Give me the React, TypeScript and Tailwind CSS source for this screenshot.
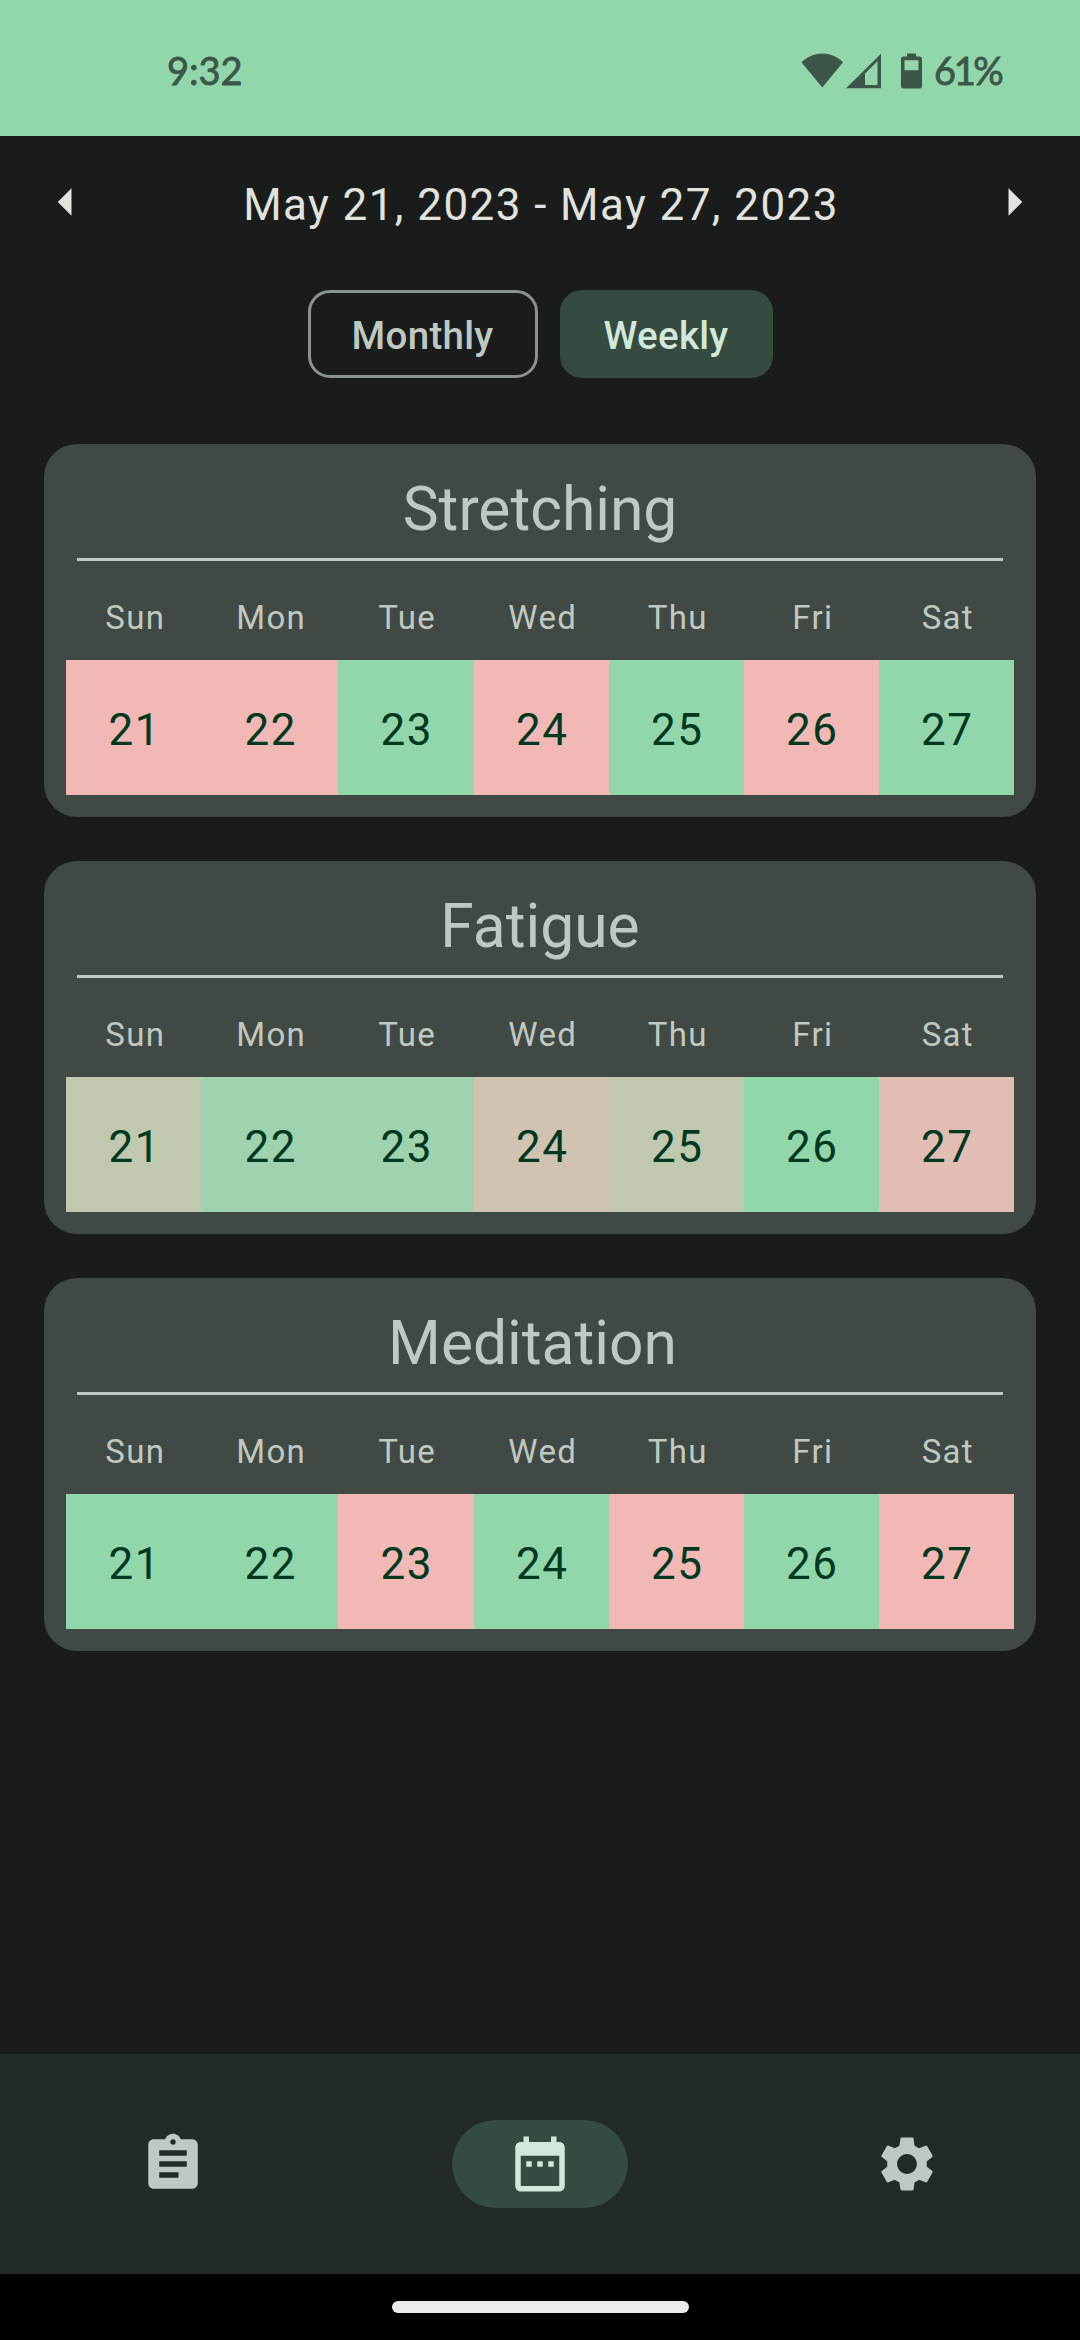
import type { ReactNode } from "react";

const WEEKDAYS = ["Sun", "Mon", "Tue", "Wed", "Thu", "Fri", "Sat"];
const DATES = [21, 22, 23, 24, 25, 26, 27];

const PINK = "bg-[#f2b8b5]";
const GREEN = "bg-[#92d6ac]";
const SAGE = "bg-[#c0c9b0]";
const MINT = "bg-[#9fd2ae]";
const SAND = "bg-[#d1c3b2]";
const BLUSH = "bg-[#e2bdb3]";

const TRACKERS = [
  { title: "Stretching", days: [PINK, PINK, GREEN, PINK, GREEN, PINK, GREEN] },
  { title: "Fatigue", days: [SAGE, MINT, MINT, SAND, SAGE, GREEN, BLUSH] },
  { title: "Meditation ", days: [GREEN, GREEN, PINK, GREEN, PINK, GREEN, PINK] },
];

const COLUMNS = "grid grid-cols-[136px_136px_136px_135px_135px_135px_135px]";

function Icon({ children, className = "" }: { children: ReactNode; className?: string }) {
  return (
    <svg viewBox="0 0 24 24" fill="currentColor" className={`size-[66px] shrink-0 ${className}`}>
      {children}
    </svg>
  );
}

function StatusBar() {
  return (
    <header className="flex h-[136px] shrink-0 items-start justify-between bg-[#92d6ac] pt-[46px] pr-[78px] pl-[167px] font-['Lato'] text-[38px] leading-[48px] text-[#3c5747] [-webkit-text-stroke:0.8px_#3c5747]">
      <span>9:32</span>
      <div className="flex">
        <svg viewBox="0 0 124 36" className="mt-[7px] mr-[10px] h-[36px] w-[124px]" fill="currentColor">
          <path d="M1.500 9.300C13.500-2.500 31.500-2.500 43 9.300L22.300 34.500Z" />
          <path fillRule="evenodd" d="M46 35.300L81 .7V35.300ZM65 20.500V32H77.500V8.300Z" />
          <path
            fillRule="evenodd"
            d="M107 .5h9v3h3.500q2.500 0 2.500 2.500v27q0 2.500-2.500 2.500h-16q-2.500 0-2.500-2.500V6q0-2.500 2.500-2.500h3.500ZM104.500 7.200v10h14V7.200Z"
          />
        </svg>
        <span className="w-[68px] tracking-[-2.4px] whitespace-nowrap">61%</span>
      </div>
    </header>
  );
}

function DateNavigator() {
  return (
    <div className="mt-[33px] flex h-[66px] shrink-0 items-center justify-between px-[33px] text-[#e1e3df]">
      <Icon>
        <path d="M14 7l-5 5 5 5V7z" />
      </Icon>
      <h1 className="pt-[6px] pl-[2px] text-[44px] leading-[66px] tracking-[1.42px]">May 21, 2023 - May 27, 2023</h1>
      <Icon>
        <path d="M10 17l5-5-5-5v10z" />
      </Icon>
    </div>
  );
}

function RangeToggle() {
  return (
    <div className="mt-[55px] flex h-[88px] shrink-0 justify-center gap-[22px] text-[38.5px] font-medium tracking-[0.275px]">
      <button className="flex w-[230px] items-center justify-center rounded-[22px] border-[3px] border-[#8a938c] pt-1 text-[#c0c9c1]">
        Monthly
      </button>
      <button className="flex w-[213px] items-center justify-center rounded-[22px] bg-[#364b3f] pt-1 text-[#d1e8da]">
        Weekly
      </button>
    </div>
  );
}

function TrackerCard({ title, days }: { title: string; days: string[] }) {
  return (
    <section className="h-[373px] rounded-[33px] bg-[#404943] px-[22px] pt-[27px] text-[#c0c9c1]">
      <h2 className="mx-[11px] flex h-[90px] justify-center border-b-[3px] border-[#c0c9c1] text-[60.5px] leading-[77px] whitespace-pre">
        {title}
      </h2>
      <div className={`mt-[35px] text-center text-[33px] leading-[44px] tracking-[1.3px] ${COLUMNS}`}>
        {WEEKDAYS.map((day) => (
          <span key={day} className="pl-[2.5px]">
            {day}
          </span>
        ))}
      </div>
      <div className={`mt-[20px] h-[135px] text-[44px] tracking-[1.5px] text-[#003920] ${COLUMNS}`}>
        {days.map((color, i) => (
          <div key={DATES[i]} className={`flex items-center justify-center pt-[5px] pl-[1.5px] ${color}`}>
            {DATES[i]}
          </div>
        ))}
      </div>
    </section>
  );
}

function BottomNav() {
  return (
    <nav className="flex h-[220px] shrink-0 items-center justify-between bg-[#222b26] px-[85px] text-[#c0c9c1]">
      <div className="flex h-[88px] w-[176px] items-center justify-center">
        <Icon>
          <path d="M19 3h-4.180C14.400 1.840 13.300 1 12 1c-1.300 0-2.400.84-2.820 2H5c-1.100 0-2 .9-2 2v14c0 1.100.9 2 2 2h14c1.100 0 2-.9 2-2V5c0-1.100-.9-2-2-2zm-7 0c.55 0 1 .45 1 1s-.45 1-1 1-1-.45-1-1 .45-1 1-1zm2 14H7v-2h7v2zm3-4H7v-2h10v2zm0-4H7V7h10v2z" />
        </Icon>
      </div>
      <div className="flex h-[88px] w-[176px] items-center justify-center rounded-full bg-[#364b3f] text-[#d1e8da]">
        <Icon>
          <path d="M9 11H7v2h2v-2zm4 0h-2v2h2v-2zm4 0h-2v2h2v-2zm2-7h-1V2h-2v2H8V2H6v2H5c-1.110 0-1.990.9-1.990 2L3 20c0 1.100.89 2 2 2h14c1.100 0 2-.9 2-2V6c0-1.100-.9-2-2-2zm0 16H5V9h14v11z" />
        </Icon>
      </div>
      <div className="flex h-[88px] w-[176px] items-center justify-center">
        <Icon>
          <path d="M19.140 12.940c.04-.3.06-.61.06-.94 0-.32-.02-.64-.07-.94l2.030-1.580c.18-.14.23-.41.12-.61l-1.920-3.320c-.12-.22-.37-.29-.59-.22l-2.390.96c-.5-.38-1.030-.7-1.620-.94l-.36-2.540c-.04-.24-.24-.41-.48-.41h-3.840c-.24 0-.43.17-.47.41l-.36 2.540c-.59.24-1.130.57-1.620.94l-2.390-.96c-.22-.08-.47 0-.59.22L2.740 8.870c-.12.21-.08.47.12.61l2.030 1.580c-.05.3-.09.63-.09.94s.02.64.07.94l-2.030 1.580c-.18.14-.23.41-.12.61l1.920 3.320c.12.22.37.29.59.22l2.390-.96c.5.38 1.030.7 1.620.94l.36 2.540c.05.24.24.41.48.41h3.840c.24 0 .44-.17.47-.41l.36-2.540c.59-.24 1.130-.56 1.620-.94l2.390.96c.22.08.47 0 .59-.22l1.920-3.320c.12-.22.07-.47-.12-.61l-2.010-1.580zM12 15.600c-1.980 0-3.600-1.620-3.600-3.600s1.620-3.600 3.600-3.600 3.600 1.620 3.600 3.600-1.620 3.600-3.600 3.600z" />
        </Icon>
      </div>
    </nav>
  );
}

export default function App() {
  return (
    <div className="flex h-[2340px] w-[1080px] flex-col overflow-hidden bg-[#1a1c1b] font-['Roboto',sans-serif]">
      <StatusBar />
      <DateNavigator />
      <RangeToggle />
      <main className="mt-[66px] flex flex-1 flex-col gap-[44px] px-[44px]">
        {TRACKERS.map((tracker) => (
          <TrackerCard key={tracker.title} {...tracker} />
        ))}
      </main>
      <BottomNav />
      <footer className="flex h-[66px] shrink-0 justify-center bg-black pt-[27px]">
        <div className="h-[12px] w-[297px] rounded-full bg-[#ebebeb]" />
      </footer>
    </div>
  );
}
